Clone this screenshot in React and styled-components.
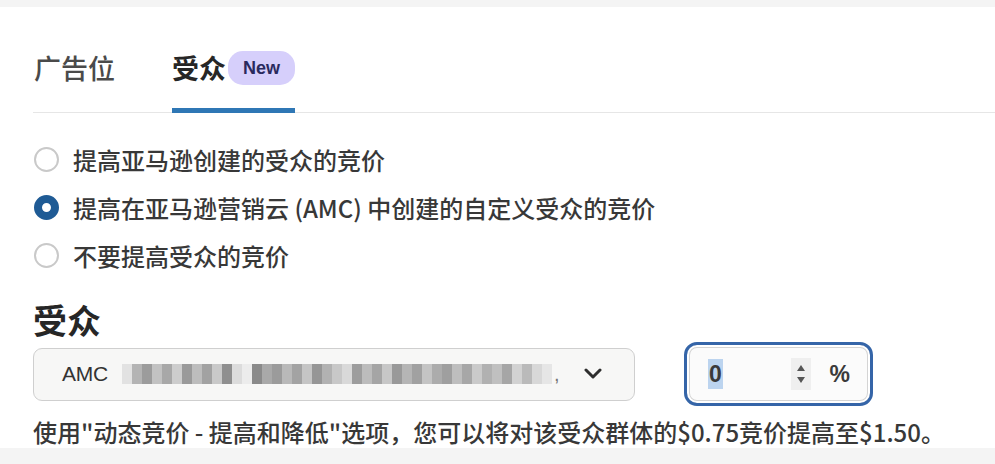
import React from "react";
import styled, { createGlobalStyle } from "styled-components";

const Global = createGlobalStyle`
  html, body { margin: 0; padding: 0; background: #f4f4f4; }
  body { font-family: "Noto Sans CJK SC", "Noto Sans", sans-serif; color: #333; }
  * { box-sizing: border-box; }
`;

const Panel = styled.div`
  margin-top: 7px;
  height: 441px;
  background: #fff;
  padding-left: 33px;
  display: flex;
  flex-direction: column;
`;

const TabBar = styled.div`
  display: flex;
  gap: 57px;
  align-items: flex-end;
  border-bottom: 1px solid #e6e6e6;
`;

const Tab = styled.div`
  display: flex;
  align-items: center;
  gap: 2px;
  padding: 44px 0 23px;
  border-bottom: 5px solid ${(p) => (p.$active ? "#2f77b5" : "transparent")};
  font-size: 27px;
  line-height: 34px;
  font-weight: ${(p) => (p.$active ? 700 : 500)};
  color: ${(p) => (p.$active ? "#262626" : "#4a4a4a")};
  margin-bottom: -1px;
  margin-left: ${(p) => (p.$first ? "1px" : "0")};
`;

const Badge = styled.span`
  display: inline-flex;
  align-items: center;
  height: 34px;
  padding: 0 15px;
  border-radius: 15px;
  background: #d6cffb;
  color: #2a2a5e;
  font-family: "Liberation Sans", Arial, sans-serif;
  font-size: 18px;
  font-weight: 700;
`;

const RadioGroup = styled.div`
  margin-top: 22px;
  display: flex;
  flex-direction: column;
`;

const RadioRow = styled.label`
  display: flex;
  align-items: center;
  gap: 14px;
  height: 48px;
  font-size: 24px;
  font-weight: 500;
  color: #383838;
`;

const RadioDot = styled.span`
  flex: none;
  width: 25px;
  height: 25px;
  margin-left: 1px;
  border-radius: 50%;
  border: ${(p) => (p.$checked ? "8px solid #1f5b95" : "2px solid #c9c9c9")};
  background: #fff;
`;

const Heading = styled.div`
  margin-top: 21px;
  font-size: 34px;
  line-height: 40px;
  font-weight: 700;
  color: #262626;
`;

const FieldRow = styled.div`
  margin-top: 2px;
  display: flex;
  align-items: center;
  gap: 49px;
`;

const Select = styled.div`
  width: 602px;
  height: 53px;
  border: 1.5px solid #cfcfcf;
  border-radius: 9px;
  background: #f7f7f6;
  display: flex;
  align-items: center;
  padding: 0 32px 0 28px;
`;

const SelectText = styled.span`
  font-family: "Liberation Sans", Arial, sans-serif;
  font-size: 21px;
  color: #333;
  letter-spacing: -0.2px;
`;

const Mosaic = styled.div`
  display: flex;
  align-items: center;
  margin-left: 14px;
  filter: blur(0.6px);
`;

const Cell = styled.span`
  flex: none;
  width: 10px;
  height: 20px;
  background: ${(p) => p.$c};
`;

const Comma = styled.span`
  font-family: "Liberation Sans", Arial, sans-serif;
  font-size: 20px;
  color: #777;
  margin-left: 2px;
`;

const ChevronWrap = styled.span`
  margin-left: auto;
  display: flex;
`;

const NumberBox = styled.div`
  width: 189px;
  height: 64px;
  border: 3px solid #3565a8;
  border-radius: 13px;
  box-shadow: inset 0 0 0 2px #fff, inset 0 0 0 3px #d4d4d4;
  background: #fbfbfb;
  display: flex;
  align-items: center;
  padding: 0 20px 0 21px;
`;

const Value = styled.span`
  font-family: "Liberation Sans", Arial, sans-serif;
  font-size: 23px;
  font-weight: 700;
  color: #3a3a3a;
  background: #bcd4ef;
  line-height: 30px;
  padding: 0 1px;
`;

const Spinner = styled.span`
  margin-left: auto;
  width: 20px;
  height: 32px;
  background: #efefef;
  display: flex;
  align-items: center;
  justify-content: center;
`;

const Percent = styled.span`
  margin-left: 19px;
  font-family: "Liberation Sans", Arial, sans-serif;
  font-size: 23px;
  font-weight: 700;
  color: #3a3a3a;
`;

const Helper = styled.div`
  margin-top: 11px;
  font-size: 24px;
  line-height: 30px;
  font-weight: 500;
  color: #383838;
  white-space: nowrap;
`;

const shades = [
  "#e2e2e2", "#b4b4b4", "#9c9c9c", "#c2c2c2", "#a8a8a8", "#cdcdcd", "#9a9a9a", "#bdbdbd",
  "#a2a2a2", "#c9c9c9", "#8f8f8f", "#dcdcdc", "#ececec", "#8a8a8a", "#a9a9a9", "#9b9b9b",
  "#b9b9b9", "#a3a3a3", "#c5c5c5", "#969696", "#b2b2b2", "#c8c8c8", "#d9d9d9", "#9d9d9d",
  "#bcbcbc", "#a5a5a5", "#c7c7c7", "#999999", "#b5b5b5", "#a1a1a1", "#c4c4c4", "#acacac",
  "#9f9f9f", "#bebebe", "#a7a7a7", "#cacaca", "#b1b1b1", "#c0c0c0", "#a6a6a6", "#d2d2d2",
  "#bababa", "#d8d8d8", "#e6e6e6",
];

const Chevron = () => (
  <svg width="18" height="12" viewBox="0 0 18 12">
    <polyline points="2,2 9,9 16,2" fill="none" stroke="#2e2e2e" strokeWidth="3" strokeLinecap="round" strokeLinejoin="round" />
  </svg>
);

const Arrows = () => (
  <svg width="10" height="22" viewBox="0 0 10 22">
    <polygon points="5,2 9,8 1,8" fill="#555" />
    <polygon points="1,14 9,14 5,20" fill="#555" />
  </svg>
);

export default function App() {
  return (
    <>
      <Global />
      <Panel>
        <TabBar>
          <Tab $first>广告位</Tab>
          <Tab $active>
            受众<Badge>New</Badge>
          </Tab>
        </TabBar>
        <RadioGroup>
          <RadioRow>
            <RadioDot />
            提高亚马逊创建的受众的竞价
          </RadioRow>
          <RadioRow>
            <RadioDot $checked />
            提高在亚马逊营销云 (AMC) 中创建的自定义受众的竞价
          </RadioRow>
          <RadioRow>
            <RadioDot />
            不要提高受众的竞价
          </RadioRow>
        </RadioGroup>
        <Heading>受众</Heading>
        <FieldRow>
          <Select>
            <SelectText>AMC</SelectText>
            <Mosaic>
              {shades.map((c, i) => (
                <Cell key={i} $c={c} />
              ))}
            </Mosaic>
            <Comma>,</Comma>
            <ChevronWrap>
              <Chevron />
            </ChevronWrap>
          </Select>
          <NumberBox>
            <Value>0</Value>
            <Spinner>
              <Arrows />
            </Spinner>
            <Percent>%</Percent>
          </NumberBox>
        </FieldRow>
        <Helper>使用"动态竞价 - 提高和降低"选项，您可以将对该受众群体的$0.75竞价提高至$1.50。</Helper>
      </Panel>
    </>
  );
}
